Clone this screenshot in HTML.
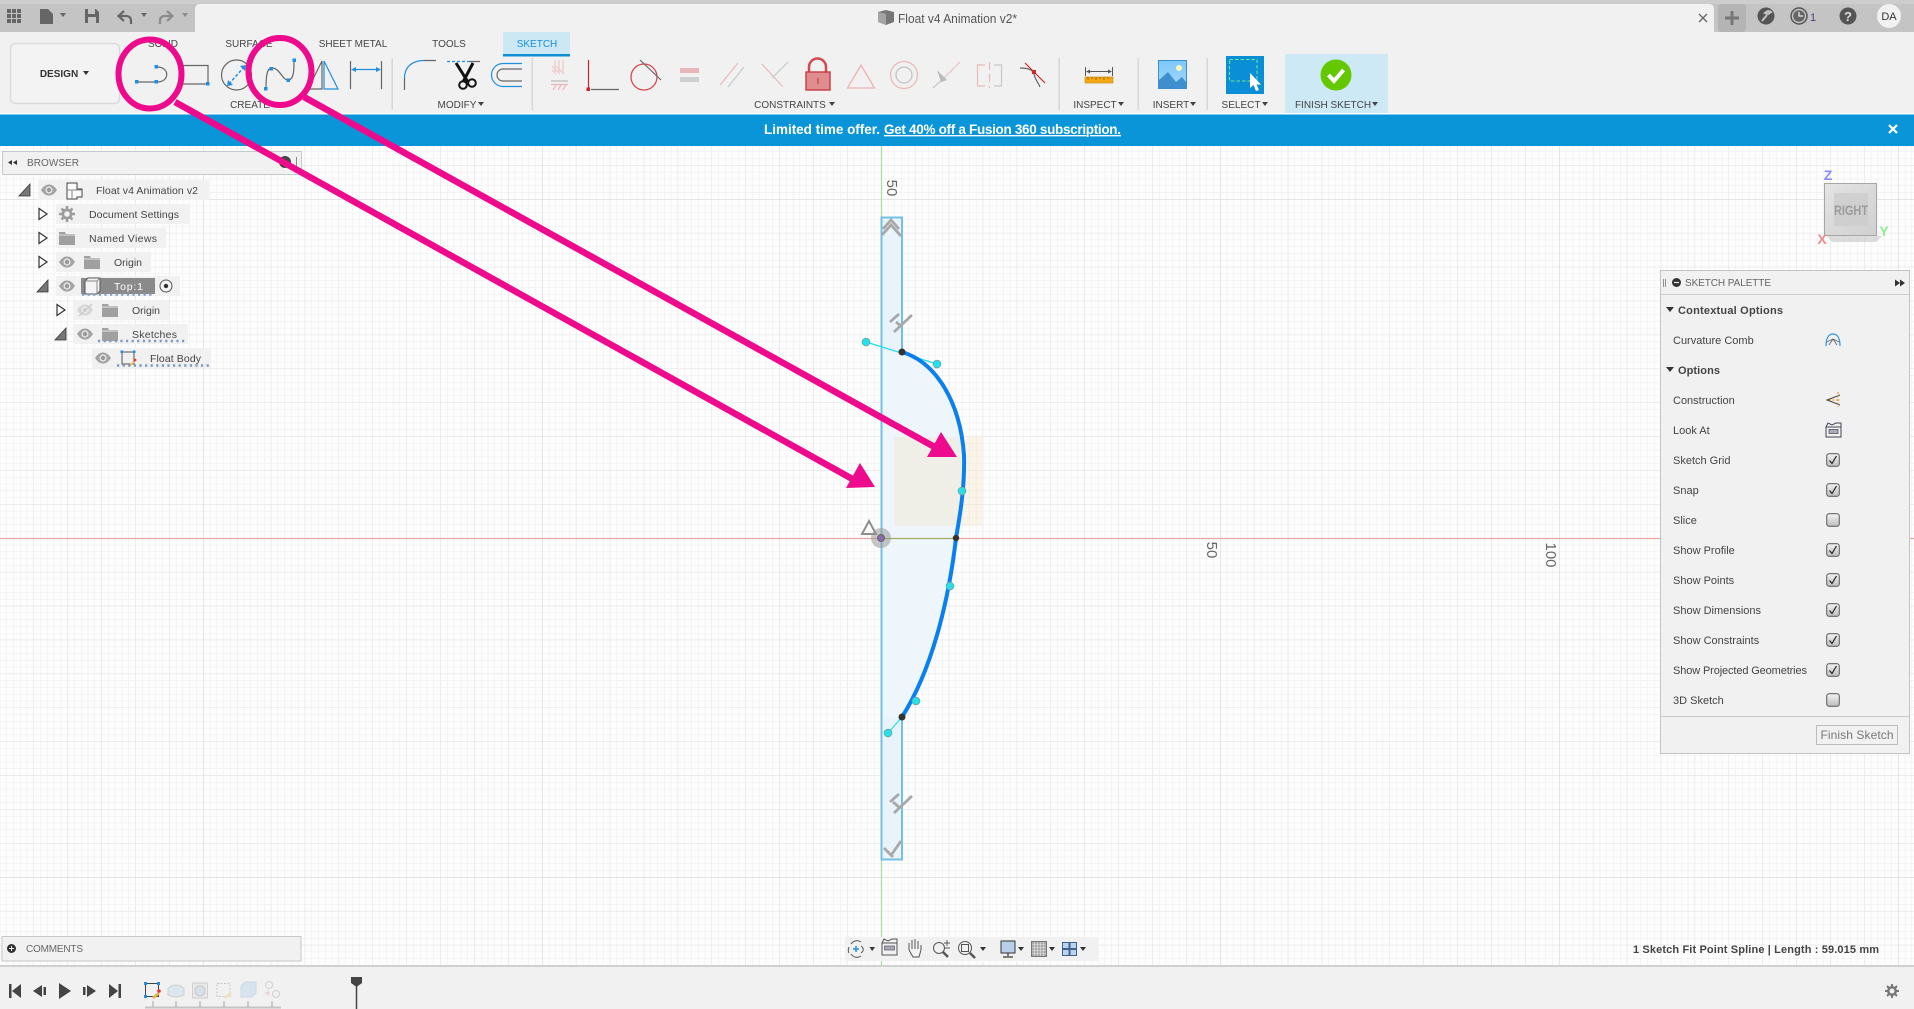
<!DOCTYPE html>
<html><head><meta charset="utf-8"><title>Float v4 Animation v2</title>
<style>
html,body{margin:0;padding:0;background:#fff;width:1914px;height:1009px;overflow:hidden}
svg{display:block;font-family:"Liberation Sans",Arial,sans-serif}
.l{font-size:10px;fill:#444;text-anchor:middle}
.b{font-size:10.5px;fill:#444}
.p{font-size:11px;fill:#444}
</style></head><body>
<svg width="1914" height="1009" viewBox="0 0 1914 1009" xmlns="http://www.w3.org/2000/svg">
<defs>
<pattern id="g1" width="6.78" height="6.78" x="881" y="538" patternUnits="userSpaceOnUse"><path d="M0 0H6.78M0 0V6.78" stroke="#ececec" stroke-width="1" fill="none"/></pattern>
<pattern id="g2" width="33.9" height="33.9" x="881" y="538" patternUnits="userSpaceOnUse"><path d="M0 0H33.9M0 0V33.9" stroke="#e2e2e2" stroke-width="1" fill="none"/></pattern>
<pattern id="g3" width="339" height="339" x="881" y="538" patternUnits="userSpaceOnUse"><path d="M0 0H339M0 0V339" stroke="#d6d6d6" stroke-width="1.2" fill="none"/></pattern>
<linearGradient id="cb" x1="0" y1="0" x2="0" y2="1"><stop offset="0" stop-color="#f4f4f4"/><stop offset="1" stop-color="#bdbdbd"/></linearGradient>
<linearGradient id="sky" x1="0" y1="0" x2="0" y2="1"><stop offset="0" stop-color="#7cc8fb"/><stop offset="1" stop-color="#a5d8f8"/></linearGradient>
<linearGradient id="cube" x1="0" y1="0" x2="1" y2="1"><stop offset="0" stop-color="#e4e4e4"/><stop offset="1" stop-color="#d0d0d0"/></linearGradient>
<symbol id="eye" width="16" height="12" viewBox="0 0 16 12" overflow="visible"><path d="M0 6C3 1.500 5.500 0.500 8 0.500S13 1.500 16 6C13 10.500 10.500 11.500 8 11.500S3 10.500 0 6Z" fill="#a3a3a3"/><circle cx="8" cy="6" r="3.600" fill="#e6e6e6"/><circle cx="8" cy="6" r="2.200" fill="#999"/></symbol>
<symbol id="fold" width="16" height="13" viewBox="0 0 16 13"><path d="M0 0H6L7 2H16V13H0Z" fill="#a0a0a0"/><path d="M0 3H16" stroke="#efefef" stroke-width=".8"/></symbol>
<symbol id="chk" width="14" height="14" viewBox="0 0 14 14"><rect x=".7" y=".7" width="12.600" height="12.600" rx="2.500" fill="url(#cb)" stroke="#666" stroke-width="1.100"/><path d="M3.500 7.500L6 10.500L10.500 3" fill="none" stroke="#222" stroke-width="1.200"/></symbol>
<symbol id="unchk" width="14" height="14" viewBox="0 0 14 14"><rect x=".7" y=".7" width="12.600" height="12.600" rx="2.500" fill="url(#cb)" stroke="#666" stroke-width="1.100"/></symbol>
</defs>

<!-- canvas -->
<rect x="0" y="146" width="1914" height="820" fill="#fdfdfd"/>
<g>
<rect x="0" y="146" width="1914" height="820" fill="url(#g1)"/>
<rect x="0" y="146" width="1914" height="820" fill="url(#g2)"/>
<rect x="0" y="146" width="1914" height="820" fill="url(#g3)"/>
</g>

<!-- axes -->
<path d="M0 538.500H1914" stroke="#eba6a2" stroke-width="1.300"/>
<path d="M881.500 146V217M881.500 859V966" stroke="#a8e2a2" stroke-width="1.300"/>

<!-- axis labels -->
<text transform="translate(887,188) rotate(90)" font-size="15" fill="#666" text-anchor="middle">50</text>
<text transform="translate(1207,550) rotate(90)" font-size="15" fill="#666" text-anchor="middle">50</text>
<text transform="translate(1546,555) rotate(90)" font-size="15" fill="#666" text-anchor="middle">100</text>

<!-- sketch profile -->
<rect x="881.500" y="217.500" width="20.500" height="642" fill="#e9f4fa" stroke="#72c0e6" stroke-width="2"/>
<path d="M882 352H902C935 362 960 400 964 455C965 490 959 520 956 538C950 590 935 665 902 717H882Z" fill="#eef6fb"/>
<path d="M881.500 217V859M902 217V352M902 717V859" stroke="#72c0e6" stroke-width="2" fill="none"/>
<rect x="894" y="437" width="88" height="89" fill="#f3d79a" opacity=".2"/>
<path d="M881 538.500H956" stroke="#a5aa5c" stroke-width="1.300"/>

<!-- handles -->
<path d="M866 342L937 364" stroke="#19e0ee" stroke-width="1.200"/>
<path d="M888 733L902 717" stroke="#19e0ee" stroke-width="1.200"/>
<path d="M902 352C935 362 960 400 964 455C965 490 959 520 956 538C950 590 935 665 902 717" fill="none" stroke="#0a7ff0" stroke-width="4"/>
<g fill="#22e3ec" stroke="#6aa" stroke-width="1">
<circle cx="866" cy="342" r="3.800"/><circle cx="937" cy="364" r="3.800"/><circle cx="962" cy="491" r="3.800"/><circle cx="950" cy="586" r="3.800"/><circle cx="916" cy="701" r="3.800"/><circle cx="888" cy="733" r="3.800"/>
</g>
<g fill="#333"><circle cx="902" cy="352" r="3.500"/><circle cx="956" cy="538" r="3.200"/><circle cx="902" cy="717" r="3.500"/></g>

<!-- constraint glyphs -->
<g fill="none" stroke="#a8a8a8" stroke-width="2.800">
<path d="M883 229L891 220L899 229M882 235L891 225L901 236"/>
<path d="M894 332L912 315M890 322L899 314M896 322L901 326"/>
<path d="M894 813L912 796M890 802L899 794M893 802L900 808"/>
<path d="M892 854L901 841M884 848L893 857"/>
</g>

<!-- origin -->
<circle cx="881" cy="538" r="10" fill="#999" opacity=".55"/>
<circle cx="881" cy="538" r="3.500" fill="#8a6aa8" stroke="#555" stroke-width=".8"/>
<path d="M869 521L876 534H862Z" fill="none" stroke="#8e8e8e" stroke-width="2"/>

<!-- viewcube -->
<path d="M1827 236H1882L1876 242H1832Z" fill="#bbb" opacity=".5"/>
<rect x="1824.500" y="183.500" width="52" height="52" fill="url(#cube)" stroke="#a6a6a6" stroke-width="1"/>
<rect x="1834" y="193" width="34" height="33" fill="#cacaca" opacity=".7"/>
<text x="1851" y="215" font-size="14" font-weight="bold" fill="#9b9b9b" text-anchor="middle" textLength="34" lengthAdjust="spacingAndGlyphs">RIGHT</text>
<text x="1828" y="180" font-size="14" fill="#8a8aff" font-weight="bold" text-anchor="middle">Z</text>
<text x="1884" y="236" font-size="14" fill="#8ef08e" font-weight="bold" text-anchor="middle">Y</text>
<text x="1822" y="244" font-size="14" fill="#f08a8a" font-weight="bold" text-anchor="middle">X</text>

<!-- top bar -->
<rect x="0" y="0" width="1914" height="32" fill="#c4c4c4"/>
<rect x="0" y="0" width="1914" height="4" fill="#cdcdcd"/>
<path d="M195 32V9Q195 4 200 4H1709Q1714 4 1714 9V32Z" fill="#f1f1f1"/>
<rect x="1718" y="4" width="28" height="28" rx="3" fill="#b4b4b4"/>
<rect x="0" y="32" width="1914" height="81" fill="#f1f1f1"/>
<rect x="0" y="113" width="1914" height="1.500" fill="#fff"/>

<!-- top-left icons -->
<g fill="#666">
<rect x="7" y="9" width="4" height="4"/><rect x="12" y="9" width="4" height="4"/><rect x="17" y="9" width="4" height="4"/>
<rect x="7" y="14" width="4" height="4"/><rect x="12" y="14" width="4" height="4"/><rect x="17" y="14" width="4" height="4"/>
<rect x="7" y="19" width="4" height="4"/><rect x="12" y="19" width="4" height="4"/><rect x="17" y="19" width="4" height="4"/>
<path d="M40 9H48L53 14V24H40Z"/>
<path d="M60 13H66L63 17Z"/>
<path d="M85 9H96L99 12V23H85ZM88 9V14H95V9ZM88 17V23H96V17Z" fill-rule="evenodd"/>
<path d="M141 13H147L144 17Z"/>
</g>
<path d="M120 16H126Q131 16 131 21V24M124 11L118.500 16L124 21" fill="none" stroke="#666" stroke-width="2.200"/>
<path d="M171 16H165Q160 16 160 21V24M167 11L172.500 16L167 21" fill="none" stroke="#8c8c8c" stroke-width="2.200"/>
<path d="M182 13H188L185 17Z" fill="#8c8c8c"/>

<!-- title -->
<path d="M878 12L886 10L894 12V22L886 25L878 22Z" fill="#777"/><path d="M878 12L886 14V25L878 22Z" fill="#a5a5a5"/>
<text x="898" y="23" font-size="12.500" fill="#555" textLength="119" lengthAdjust="spacingAndGlyphs">Float v4 Animation v2*</text>

<!-- right top -->
<path d="M1699 14L1707 22M1707 14L1699 22" stroke="#666" stroke-width="1.300"/>
<path d="M1732 11V25M1725 18H1739" stroke="#777" stroke-width="3"/>
<circle cx="1766" cy="16" r="8.500" fill="#555"/><path d="M1762 21L1767 15M1765 13Q1768 10 1771 12L1768 14Z" stroke="#c4c4c4" stroke-width="2" fill="none"/>
<circle cx="1799" cy="16" r="8" fill="none" stroke="#555" stroke-width="1.500"/><circle cx="1799" cy="16" r="5.800" fill="#666"/><path d="M1799 12V16H1803" stroke="#eee" stroke-width="1.200" fill="none"/>
<text x="1813" y="21" font-size="11" fill="#5a3a70" text-anchor="middle">1</text>
<circle cx="1848" cy="16" r="8.500" fill="#555"/><text x="1848" y="21" font-size="13" font-weight="bold" fill="#ddd" text-anchor="middle">?</text>
<circle cx="1889" cy="16" r="12" fill="#f1f1f1"/><text x="1889" y="20" font-size="11" fill="#333" text-anchor="middle">DA</text>

<!-- ribbon tabs -->
<rect x="10.500" y="43.500" width="109" height="60" rx="5" fill="#f3f3f3" stroke="#dcdcdc" stroke-width="1.500"/>
<text x="59" y="77" font-size="10" font-weight="bold" fill="#333" text-anchor="middle">DESIGN</text>
<path d="M83 71H89L86 75Z" fill="#333"/>
<rect x="503" y="32" width="67" height="24" fill="#cce8f5"/><rect x="503" y="54" width="67" height="2.500" fill="#0f8fd8"/>
<text class="l" x="163" y="47">SOLID</text>
<text class="l" x="249" y="47">SURFACE</text>
<text class="l" x="353" y="47">SHEET METAL</text>
<text class="l" x="449" y="47">TOOLS</text>
<text x="537" y="47" font-size="10" font-weight="normal" fill="#1a8fdb" text-anchor="middle">SKETCH</text>

<!-- ribbon separators -->
<g fill="#d8d8d8"><rect x="391.500" y="58" width="1.500" height="52"/><rect x="531.500" y="58" width="1.500" height="52"/><rect x="1058.500" y="58" width="1.500" height="52"/><rect x="1137.500" y="58" width="1.500" height="52"/><rect x="1206.500" y="58" width="1.500" height="52"/></g>

<!-- create icons -->
<g fill="none" stroke="#666" stroke-width="1.200">
<path d="M137 82H156M157 67C170 67 170 82 157 82"/>
<path d="M181 65.500H208V84M181 84H206"/>
<circle cx="236.500" cy="75" r="15"/>
<path d="M266 88C266 72 268 68 272 68C280 68 282 80 288 80C294 80 294 70 294 61"/>
<path d="M322 61L308 89H322Z"/>
<path d="M350.500 61V89M381.500 61V89"/>
<path d="M404.500 90V78M424 60.500H436"/>
<path d="M470 61.500H480"/>
<path d="M522 69H503A6 6 0 0 0 503 81H522"/>
</g>
<g fill="#1f8fe0">
<rect x="135" y="80" width="3.500" height="3.500"/><rect x="154.500" y="80" width="3.500" height="3.500"/><rect x="154.500" y="65" width="3.500" height="3.500"/>
<rect x="206" y="82" width="3.500" height="3.500"/>
<rect x="264" y="87" width="3.500" height="3.500"/><rect x="269.500" y="67" width="3.500" height="3.500"/><rect x="286.500" y="78.500" width="3.500" height="3.500"/><rect x="292.500" y="58.500" width="3.500" height="3.500"/>
</g>
<path d="M229 84L244 67" stroke="#1f8fe0" stroke-width="1.500" stroke-dasharray="3 2" fill="none"/>
<path d="M227 86L233 85L228 80ZM246 65L240 66L245 71Z" fill="#1f8fe0"/>
<path d="M324 61L338 89H324Z" fill="none" stroke="#1f8fe0" stroke-width="1.200"/>
<path d="M353 69.500H379" stroke="#1f8fe0" stroke-width="1.200"/><path d="M351 69.500L356 67V72ZM381 69.500L376 67V72Z" fill="#1f8fe0"/>
<path d="M404.500 78C404.500 67 412 60.500 424 60.500" fill="none" stroke="#1f8fe0" stroke-width="1.200"/>
<path d="M447 61.500H470" stroke="#1f8fe0" stroke-width="1.200" stroke-dasharray="3 2"/>
<path d="M456 63L468 82M473 63L463 82" stroke="#111" stroke-width="3" fill="none"/>
<circle cx="463" cy="85" r="3.800" fill="none" stroke="#111" stroke-width="2"/><circle cx="472" cy="83" r="3.800" fill="none" stroke="#111" stroke-width="2"/>
<path d="M522 63.500H503A11.500 11.500 0 0 0 503 86.500H522" fill="none" stroke="#1f8fe0" stroke-width="1.200"/>

<!-- constraints -->
<g fill="none" stroke-width="1.200">
<path d="M555 60V72M559 60V72M563 60V72M552 70L556 74M556 70L560 74M560 70L564 74M556 66L560 70M552 66L556 70" stroke="#ecc7c8"/>
<path d="M551 81H568" stroke="#bbb"/>
<path d="M551 84.500H568M553 90L556 85M558 90L561 85M563 90L566 85" stroke="#ecb4b6"/>
<path d="M588.500 60V89" stroke="#cc2222"/><path d="M591 89.500H619" stroke="#666"/>
<circle cx="644" cy="77" r="13" stroke="#d9474c" stroke-width="1.300"/>
<path d="M640 60L661 80" stroke="#666"/>
<path d="M720 85L738 63" stroke="#ecb8ba"/><path d="M728 87L744 67" stroke="#c8c8c8"/>
<path d="M762 64L783 87" stroke="#ecb8ba"/><path d="M772 78L788 62" stroke="#c8c8c8"/>
<path d="M861 65L874.500 88H847.500Z" stroke="#ecb4b6" stroke-width="1.300"/>
<circle cx="904" cy="75" r="13.500" stroke="#ecb8ba" stroke-width="1.300"/><circle cx="904" cy="75" r="8" stroke="#c4c4c4" stroke-width="1.300"/>
<path d="M945 77L960 62" stroke="#ecc0c2"/><path d="M933 88L945 77" stroke="#c8c8c8"/>
<path d="M985 65H977.500V86H985" stroke="#ecb8ba"/><path d="M994 65H1001.500V86H994" stroke="#c8c8c8"/>
<path d="M989.500 62V88" stroke="#ecb8ba" stroke-dasharray="8 4"/>
<path d="M1025 63L1045 83" stroke="#cc2a2a"/>
<path d="M1020 68C1028 68 1033 70 1034 74C1035 80 1037 80 1040 87" stroke="#666"/>
</g>
<rect x="586.500" y="87.500" width="3.500" height="3.500" fill="#cc2222"/>
<rect x="680" y="68" width="19" height="5" fill="#e8b4b8"/><rect x="680" y="77" width="19" height="5" fill="#cfcfcf"/>
<path d="M809 73V67A8.500 8.500 0 0 1 826 67V73" fill="none" stroke="#d04a50" stroke-width="2.500"/>
<rect x="806" y="72" width="24" height="18" fill="#e08d90" stroke="#cc3a42" stroke-width="1.400"/><path d="M818 78V84" stroke="#b33" stroke-width="1"/>
<path d="M937 70L947 80L941 82Z" fill="#bbb"/>
<rect x="1032" y="70" width="4" height="4" fill="#cc2a2a"/>

<!-- inspect insert select -->
<rect x="1085" y="77" width="28" height="6" fill="#f3a712" stroke="#c98a10" stroke-width=".6"/>
<path d="M1088 77V80M1092 77V79M1096 77V80M1100 77V79M1104 77V80M1108 77V79" stroke="#805800" stroke-width=".7"/>
<path d="M1085.500 67V76M1112.500 67V76M1087 71.500H1111" stroke="#555" stroke-width="1"/>
<path d="M1086 71.500L1090 69.500V73.500ZM1112 71.500L1108 69.500V73.500Z" fill="#555"/>
<rect x="1158.500" y="60.500" width="28" height="28" fill="url(#sky)" stroke="#3a8fce" stroke-width="1"/>
<circle cx="1179" cy="68" r="3" fill="#fff4b8"/>
<path d="M1159 80L1168 72L1176 82L1182 77L1186 82V88.500H1159Z" fill="#3f8fcf"/>
<rect x="1226" y="56" width="38" height="38" fill="#0a8ed6"/>
<rect x="1229.500" y="59.500" width="27.500" height="21.500" fill="none" stroke="#6ee39a" stroke-width="1.100" stroke-dasharray="3.500 2"/>
<path d="M1250 73V88L1253.500 85L1256 91L1259 90L1256.500 84.500H1261Z" fill="#fff"/>
<rect x="1285" y="54" width="103" height="59" fill="#cde9f5"/>
<circle cx="1336" cy="75" r="15.500" fill="#64c800"/>
<path d="M1328.500 75L1334 81L1343.500 70" fill="none" stroke="#fff" stroke-width="4"/>

<!-- ribbon labels -->
<text class="l" x="250" y="108">CREATE</text>
<text class="l" x="457" y="108">MODIFY</text><path d="M478 102H484L481 106Z" fill="#444"/>
<text class="l" x="790" y="108">CONSTRAINTS</text><path d="M829 102H835L832 106Z" fill="#444"/>
<text class="l" x="1095" y="108">INSPECT</text><path d="M1118 102H1124L1121 106Z" fill="#444"/>
<text class="l" x="1171" y="108">INSERT</text><path d="M1190 102H1196L1193 106Z" fill="#444"/>
<text class="l" x="1241" y="108">SELECT</text><path d="M1262 102H1268L1265 106Z" fill="#444"/>
<text class="l" x="1333" y="108">FINISH SKETCH</text><path d="M1372 102H1378L1375 106Z" fill="#444"/>

<!-- banner -->
<rect x="0" y="114.500" width="1914" height="31.500" fill="#0a95d9"/>
<text x="764" y="134" font-size="13.500" font-weight="bold" fill="#fff" textLength="116">Limited time offer.</text>
<text x="884" y="134" font-size="13.500" font-weight="bold" fill="#fff" text-decoration="underline" textLength="237">Get 40% off a Fusion 360 subscription.</text>
<path d="M1889 125L1897 133M1897 125L1889 133" stroke="#fff" stroke-width="2.200"/>

<!-- browser -->
<rect x="2.500" y="151.500" width="299" height="23" fill="#f1f1f1" stroke="#c8c8c8"/>
<path d="M8 162.500L12 160V165ZM13 162.500L17 160V165Z" fill="#333"/>
<text x="27" y="166" font-size="10" fill="#666" textLength="52">BROWSER</text>
<circle cx="285" cy="162" r="6" fill="#444"/>
<path d="M296.500 157V167" stroke="#888"/>

<g fill="#f1f1f1">
<rect x="38" y="180" width="171" height="20"/>
<rect x="56" y="204" width="134" height="20"/>
<rect x="56" y="228" width="110" height="20"/>
<rect x="56" y="252" width="95" height="20"/>
<rect x="56" y="276" width="124" height="20"/>
<rect x="73" y="300" width="96" height="20"/>
<rect x="73" y="324" width="115" height="20"/>
<rect x="92" y="348" width="119" height="20"/>
</g>
<!-- tree toggles -->
<path d="M19 196H30V184Z" fill="#777" stroke="#333" stroke-width=".8"/>
<path d="M37 292H48V280Z" fill="#777" stroke="#333" stroke-width=".8"/>
<path d="M55 340H66V328Z" fill="#777" stroke="#333" stroke-width=".8"/>
<g fill="#fff" stroke="#333" stroke-width="1.200">
<path d="M39 208.500L47 214L39 219.500Z"/><path d="M39 232.500L47 238L39 243.500Z"/><path d="M39 256.500L47 262L39 267.500Z"/><path d="M57 304.500L65 310L57 315.500Z"/>
</g>
<!-- row icons -->
<use href="#eye" x="41" y="184"/>
<path d="M67 183H77V189H82V197H77V199H67Z" fill="#fafafa" stroke="#444" stroke-width="1"/><path d="M67 190H82M72 190V199" stroke="#888" fill="none"/>
<circle cx="67" cy="214" r="5.500" fill="#9c9c9c"/>
<path d="M67 206V222M59 214H75M61.500 208.500L72.500 219.500M72.500 208.500L61.500 219.500" stroke="#9c9c9c" stroke-width="2.500"/>
<circle cx="67" cy="214" r="2.800" fill="#f1f1f1"/>
<use href="#fold" x="59" y="232"/>
<use href="#eye" x="59" y="256"/><use href="#fold" x="84" y="256"/>
<use href="#eye" x="59" y="280"/>
<rect x="81" y="278" width="74" height="16" fill="#8a8a8a"/>
<path d="M85 281L88 278H100V291L97 294H85Z" fill="#f4f4f4" stroke="#555"/><path d="M85 281H97V294M97 281L100 278" stroke="#888" fill="none"/>
<circle cx="166" cy="286" r="6" fill="#f5f5f5" stroke="#555" stroke-width="1"/><circle cx="166" cy="286" r="2.200" fill="#333"/>
<g opacity=".35"><use href="#eye" x="77" y="304"/><path d="M79 316L92 304" stroke="#888" stroke-width="1.500"/></g>
<use href="#fold" x="102" y="304"/>
<use href="#eye" x="77" y="328"/><use href="#fold" x="102" y="328"/>
<use href="#eye" x="95" y="352"/>
<path d="M122 352H134V364H122Z" fill="none" stroke="#555" stroke-width="1"/>
<rect x="120.500" y="350.500" width="2.500" height="2.500" fill="#1f8fe0"/><rect x="133" y="350.500" width="2.500" height="2.500" fill="#1f8fe0"/>
<path d="M129 366L134 362" stroke="#f0c060" stroke-width="2"/><circle cx="135" cy="360" r="1.400" fill="#e33"/>
<!-- hatch -->
<g stroke="#7d99c4" stroke-width="2.600" fill="none" stroke-dasharray="2.200 3.400">
<path d="M82 294.500H152"/><path d="M98 341H187"/><path d="M117 365.500H211"/>
</g>
<!-- row text -->
<text class="b" x="96" y="194" textLength="102">Float v4 Animation v2</text>
<text class="b" x="89" y="218" textLength="90">Document Settings</text>
<text class="b" x="89" y="242" textLength="68">Named Views</text>
<text class="b" x="114" y="266" textLength="28">Origin</text>
<text class="b" x="114" y="290" style="fill:#fff" textLength="29">Top:1</text>
<text class="b" x="132" y="314" textLength="28">Origin</text>
<text class="b" x="132" y="338" textLength="45">Sketches</text>
<text class="b" x="150" y="362" textLength="51">Float Body</text>

<!-- palette -->
<rect x="1660.500" y="270.500" width="249" height="483" fill="#f1f1f1" stroke="#c4c4c4"/>
<path d="M1661 294.500H1909" stroke="#cfcfcf"/>
<path d="M1663.500 279V287M1665.500 279V287" stroke="#777" stroke-width=".8"/>
<circle cx="1676.500" cy="282.500" r="4.500" fill="#333"/><path d="M1674 282.500H1679" stroke="#eee" stroke-width="1.200"/>
<text x="1685" y="286" font-size="10" fill="#666" textLength="86">SKETCH PALETTE</text>
<path d="M1895 279.500L1900 283L1895 286.500ZM1900 279.500L1905 283L1900 286.500Z" fill="#333"/>
<path d="M1666 307H1674L1670 312Z" fill="#333"/>
<text x="1678" y="314" font-size="11" font-weight="bold" fill="#444" textLength="105">Contextual Options</text>
<path d="M1666 367H1674L1670 372Z" fill="#333"/>
<text x="1678" y="374" font-size="11" font-weight="bold" fill="#444" textLength="42">Options</text>
<text class="p" x="1673" y="344">Curvature Comb</text>
<text class="p" x="1673" y="404">Construction</text>
<text class="p" x="1673" y="434">Look At</text>
<text class="p" x="1673" y="464">Sketch Grid</text>
<text class="p" x="1673" y="494">Snap</text>
<text class="p" x="1673" y="524">Slice</text>
<text class="p" x="1673" y="554">Show Profile</text>
<text class="p" x="1673" y="584">Show Points</text>
<text class="p" x="1673" y="614">Show Dimensions</text>
<text class="p" x="1673" y="644">Show Constraints</text>
<text class="p" x="1673" y="674" textLength="134">Show Projected Geometries</text>
<text class="p" x="1673" y="704">3D Sketch</text>
<path d="M1826 346C1826 336 1830 334 1833 334C1836 334 1840 336 1840 346" fill="none" stroke="#2a93e0" stroke-width="1.200"/>
<path d="M1829 345L1833 339L1837 345M1827 342L1833 339L1839 342" fill="none" stroke="#666" stroke-width=".9"/>
<path d="M1840 395L1827 400L1840 405" fill="none" stroke="#444" stroke-width="1"/>
<path d="M1838 392V407M1829 400H1840" stroke="#ee8a10" stroke-width="1" stroke-dasharray="2 1.500" fill="none"/>
<path d="M1826 427H1841V437H1826ZM1826 427L1828 423L1832 425L1836 423L1841 423V427" fill="none" stroke="#445" stroke-width="1"/>
<rect x="1829" y="429.500" width="9" height="4" fill="#aab" stroke="#445" stroke-width=".7"/>
<use href="#chk" x="1826" y="453"/>
<use href="#chk" x="1826" y="483"/>
<use href="#unchk" x="1826" y="513"/>
<use href="#chk" x="1826" y="543"/>
<use href="#chk" x="1826" y="573"/>
<use href="#chk" x="1826" y="603"/>
<use href="#chk" x="1826" y="633"/>
<use href="#chk" x="1826" y="663"/>
<use href="#unchk" x="1826" y="693"/>
<path d="M1661 716.500H1909" stroke="#c8c8c8"/>
<rect x="1816.500" y="725.500" width="81" height="19" fill="#f1f1f1" stroke="#bdbdbd"/>
<text x="1857" y="739" font-size="12" fill="#777" text-anchor="middle" textLength="73">Finish Sketch</text>

<!-- comments -->
<rect x="2" y="936.500" width="299" height="24.500" fill="#f1f1f1" stroke="#c8c8c8"/>
<circle cx="11.500" cy="948.500" r="4.500" fill="#333"/><path d="M9 948.500H14M11.500 946V951" stroke="#eee" stroke-width="1"/>
<text x="26" y="952" font-size="10" fill="#666" textLength="57">COMMENTS</text>

<!-- nav bar -->
<rect x="845" y="937" width="253" height="24" fill="#f1f1f1"/>
<g fill="none" stroke="#555" stroke-width="1">
<path d="M851 944C854 940 858 940 861 942M851 954C854 958 858 958 861 956M861 946C864 948 864 951 861 953M849 947C848 950 848 951 849 953"/>
<path d="M882 943H897V955H882ZM882 943L884 939L888 941L892 939L897 939V943"/>
<path d="M909 950V943M912 949V940M915 949V939M918 949V941M921 950V945M909 950L913 957H919L921 950"/>
<circle cx="939" cy="948" r="5.500"/><path d="M943 952L948 957" stroke-width="2.500"/>
<path d="M944 943H950M947 940V946M944 948H950" stroke-width=".9"/>
<circle cx="965" cy="948" r="6.500"/><rect x="961.500" y="944.500" width="7" height="7"/><path d="M970 953L975 958" stroke-width="2.500"/>
</g>
<path d="M853 949H859M856 946V952" stroke="#1f8fe0" stroke-width="1.500"/>
<rect x="884.500" y="946" width="10" height="4" fill="#aab" stroke="#444" stroke-width=".6"/>
<rect x="1001" y="941" width="14" height="12" fill="#b8d0ec" stroke="#333"/><path d="M1008 953V956M1003 957H1013" stroke="#333" stroke-width="1.200"/>
<rect x="1031.500" y="941.500" width="15" height="15" fill="#a8a8a8" stroke="#777"/>
<path d="M1034.500 942V956M1037.500 942V956M1040.500 942V956M1043.500 942V956M1032 944.500H1046M1032 947.500H1046M1032 950.500H1046M1032 953.500H1046" stroke="#e4e4e4" stroke-width=".6"/>
<g fill="#bcd3ee" stroke="#3d6290" stroke-width="1"><rect x="1062.500" y="942.500" width="6.500" height="6"/><rect x="1070" y="942.500" width="6.500" height="6"/><rect x="1062.500" y="949.500" width="6.500" height="6"/><rect x="1070" y="949.500" width="6.500" height="6"/></g>
<g fill="#333"><path d="M869.500 947H875L872.200 951Z"/><path d="M980 947H986L983 951Z"/><path d="M1018 947H1024L1021 951Z"/><path d="M1049 947H1055L1052 951Z"/><path d="M1080 947H1086L1083 951Z"/></g>

<!-- status -->
<text x="1633" y="953" font-size="11" font-weight="bold" fill="#444" textLength="246">1 Sketch Fit Point Spline | Length : 59.015 mm</text>

<!-- bottom bar -->
<rect x="0" y="966" width="1914" height="43" fill="#f1f1f1"/>
<rect x="0" y="965" width="1914" height="2" fill="#d0d0d0"/>
<g fill="#444">
<rect x="9" y="984" width="2.500" height="14"/><path d="M21 984V998L12 991Z"/>
<path d="M42 985V997L33 991Z"/><rect x="43.500" y="987" width="2.500" height="8"/>
<path d="M59 983V999L71 991Z"/>
<rect x="83" y="987" width="2.500" height="8"/><path d="M87 985V997L96 991Z"/>
<path d="M109 984V998L118 991Z"/><rect x="118.500" y="984" width="2.500" height="14"/>
</g>
<!-- timeline -->
<rect x="145.500" y="983.500" width="13" height="13" fill="none" stroke="#444" stroke-width="1"/>
<rect x="144" y="982" width="3" height="3" fill="#1f8fe0"/><rect x="157" y="982" width="3" height="3" fill="#1f8fe0"/><rect x="144" y="995" width="3" height="3" fill="#1f8fe0"/>
<path d="M153 998L159 993" stroke="#e8b040" stroke-width="2.500"/><circle cx="159" cy="991" r="1.800" fill="#e33"/>
<g opacity=".6">
<path d="M168 988Q176 982 184 988V995Q176 999 168 995Z" fill="#cfe0ee" stroke="#bbb"/>
<rect x="192.500" y="983" width="15" height="15" fill="#e4e4e4" stroke="#bbb"/><circle cx="200" cy="991" r="5" fill="#c7d8e8" stroke="#aaa"/>
<rect x="217" y="983.500" width="13" height="13" fill="none" stroke="#aaa" stroke-dasharray="2 1.500"/>
<path d="M225 998L231 993" stroke="#f0d49a" stroke-width="2.500"/>
<path d="M241 986L245 982H256V993L252 997H241Z" fill="#c7ddee" stroke="#b8c8d8"/>
<circle cx="269" cy="985" r="3.500" fill="none" stroke="#bbb"/><circle cx="276" cy="994" r="3.500" fill="none" stroke="#bbb"/><path d="M265 993H270M268 990V996" stroke="#eaa" stroke-width="1"/>
</g>
<path d="M145 1007.500H281" stroke="#c4c4c4" stroke-width="2"/>
<path d="M153 1001V1007M176 1001V1007M200 1001V1007M224 1001V1007M248 1001V1007M272 1001V1007" stroke="#b0b0b0" stroke-width="1.200"/>
<path d="M351 977H362V983L356.500 987L351 983Z" fill="#444"/><path d="M356.500 985V1009" stroke="#444" stroke-width="1.500"/>
<!-- gear -->
<circle cx="1892" cy="991" r="5" fill="#777"/>
<path d="M1892 984V998M1885 991H1899M1887 986L1897 996M1897 986L1887 996" stroke="#777" stroke-width="2"/>
<circle cx="1892" cy="991" r="2.500" fill="#f1f1f1"/>

<!-- annotations -->
<g fill="none" stroke="#ee0a8c" stroke-width="6">
<ellipse cx="150" cy="74" rx="31.500" ry="34.500"/>
<ellipse cx="280" cy="71.500" rx="31.500" ry="33.500"/>
</g>
<g stroke="#ee0a8c" stroke-width="6.500" fill="none">
<path d="M175 102L856 481"/>
<path d="M304 97L940 450"/>
</g>
<g fill="#ee0a8c">
<path d="M846 488L860 463L875 487Z"/>
<path d="M927 457L941 432L957 457Z"/>
</g>
</svg>
</body></html>
